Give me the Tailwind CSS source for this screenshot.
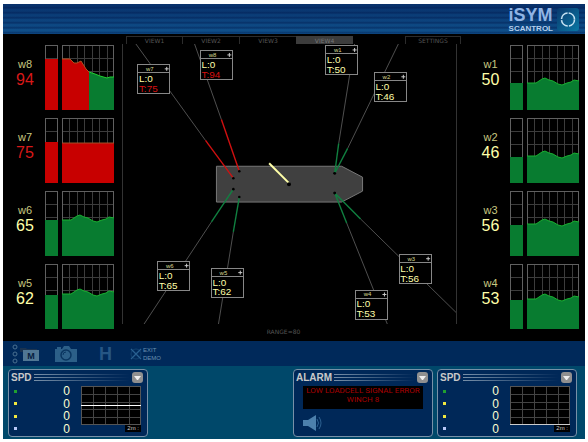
<!DOCTYPE html>
<html lang="en">
<head>
  <meta charset="UTF-8">
  <meta name="viewport" content="width=device-width, initial-scale=1.0">
  <title>iSYM Scantrol</title>
  <script src="https://cdn.jsdelivr.net/npm/@tailwindcss/browser@4"></script>
</head>
<body class="bg-white font-['Liberation_Sans',Arial,sans-serif]">
  <div class="mx-[3px] mt-1 flex flex-col">

    <!-- header -->
    <header class="flex h-[30px] items-center justify-end gap-1 pr-[6px] bg-[repeating-linear-gradient(to_bottom,transparent_0px,transparent_2px,#00184c80_4px,transparent_5px),linear-gradient(to_bottom,#08306a,#10528c)]">
      <h1 class="flex flex-col font-bold">
        <span class="text-[18px] leading-[18px] text-[#90b4e4]">iSYM</span>
        <span class="text-[8px] leading-[9px] text-[#b4d0ee]">SCANTROL</span>
      </h1>
      <svg class="h-[23px] w-[22px]" viewBox="0 0 22 23">
        <defs>
          <linearGradient id="logoBg" x1="0" y1="0" x2="1" y2="1">
            <stop offset="0" stop-color="#0a3a6e"/>
            <stop offset="1" stop-color="#0a78a4"/>
          </linearGradient>
        </defs>
        <rect width="22" height="23" rx="3" fill="url(#logoBg)"/>
        <circle cx="11" cy="11.5" r="6.5" fill="none" stroke="#c4e2f2" stroke-width="1.6" stroke-dasharray="9 1.2"/>
      </svg>
    </header>

    <!-- winches and mooring view -->
    <main class="grid grid-cols-[119px_1fr_128px] bg-black">
      <section id="portWinches" class="flex flex-col gap-2 pt-[11px] pb-3"></section>

      <section class="flex flex-col">
        <nav class="-mr-1 ml-1 flex h-[10px] items-start pt-[2px] font-['DejaVu_Sans',sans-serif] text-[6px] leading-[7px] text-[#555555]">
          <button class="w-[57px] border-x border-t border-[#2c2c2c]">VIEW1</button>
          <button class="w-[57px] border-r border-t border-[#2c2c2c]">VIEW2</button>
          <button class="w-[56px] border-t border-[#2c2c2c]">VIEW3</button>
          <button class="w-[57px] border-t border-[#3c3c3c] bg-[#3c3c3c] text-[#777777]">VIEW4</button>
          <button class="ml-auto w-[56px] border-x border-t border-[#2c2c2c]">SETTINGS</button>
        </nav>
        <div class="border-x border-[#333333]">
          <svg id="map" class="block w-full" viewBox="122 44 335 282">
            <polygon points="216,167 342,167 363,178 363,192 342,203 216,203" fill="#404040" stroke="#787878"/>
            <g id="lines" fill="none"></g>
            <path d="M269 164L289 184" stroke="#ffffa8" stroke-width="2"/>
            <circle cx="289" cy="185" r="2" fill="#000"/>
            <g id="tags"></g>
          </svg>
        </div>
        <p class="pt-1 pr-3 text-center font-['DejaVu_Sans',sans-serif] text-[6px] leading-[8px] text-[#555555]">RANGE=80</p>
      </section>

      <section id="starboardWinches" class="flex flex-col gap-2 pt-[11px] pb-3"></section>
    </main>

    <!-- toolbar -->
    <div class="flex h-[25px] items-center bg-[#00295a] pl-[9px]">
      <button aria-label="Menu" class="w-[31px]">
        <svg class="h-5 w-[31px]" viewBox="0 0 31 20">
          <g fill="none" stroke="#4a7090">
            <circle cx="3" cy="3" r="2"/>
            <circle cx="3" cy="10" r="2"/>
            <circle cx="3" cy="17" r="2"/>
          </g>
          <path d="M8 4h6l1 1h10v3h-17z" fill="#1a3350"/>
          <rect x="11" y="6" width="16" height="11" fill="#507794"/>
          <text x="19" y="15" font-size="9" font-weight="bold" text-anchor="middle" fill="#06203f">M</text>
        </svg>
      </button>
      <button aria-label="Camera" class="ml-3 pt-px">
        <svg class="h-[18px] w-[22px]" viewBox="0 0 22 18">
          <path d="M0 4h2v-2h4v2h1l2-3h5l2 3h6v13h-22z" fill="#2c5f88"/>
          <circle cx="11" cy="10" r="5" fill="none" stroke="#0a3560" stroke-width="1.5"/>
          <path d="M8 10a3 3 0 0 1 3-3" fill="none" stroke="#0a3560"/>
        </svg>
      </button>
      <button class="ml-[22px] text-[18px] leading-5 font-bold text-[#265684]">H</button>
      <button class="ml-[18px] flex items-center gap-px text-left text-[6px] leading-[8px] text-[#6890b0]">
        <svg class="h-3 w-3" viewBox="0 0 12 12" fill="none">
          <circle cx="6" cy="6" r="5" stroke="#134270"/>
          <path d="M1 1l10 10M11 1L1 11" stroke="#286090" stroke-width="1.3"/>
        </svg>
        <span>EXIT<br>DEMO</span>
      </button>
    </div>

    <!-- status panels -->
    <footer class="flex gap-1 bg-[#00486a] pt-[3px] pr-2 pb-[2px] pl-[5px]">
      <section class="mr-auto h-[68px] w-[140px] rounded-[4px] border border-[#7890a8] bg-[#002858]">
        <div class="flex h-[15px] items-center gap-[2px] pr-1 pl-[2px]">
          <h2 class="text-[10px] leading-[12px] font-bold text-[#c8c8c8]">SPD</h2>
          <span class="h-[7px] flex-1 bg-[repeating-linear-gradient(to_bottom,#7890a8_0px,#7890a8_1px,transparent_1px,transparent_3px)] mask-r-from-0%"></span>
          <button aria-label="Collapse SPD"><svg class="h-[11px] w-[11px]" viewBox="0 0 11 11"><rect width="11" height="11" rx="3" fill="#909090"/><path d="M2 4h7l-3 4h-1z" fill="#eeeeee"/></svg></button>
        </div>
        <div class="flex pl-[5px]">
          <ul class="grid h-[50px] w-[56px] grid-rows-4 text-[12px] leading-[12px] text-[#ffffd0]">
            <li class="flex items-center justify-between"><i class="size-[3px] bg-[#20a030]"></i>0</li>
            <li class="flex items-center justify-between"><i class="size-[3px] bg-[#f0e840]"></i>0</li>
            <li class="flex items-center justify-between"><i class="size-[3px] bg-[#f0e840]"></i>0</li>
            <li class="flex items-center justify-between"><i class="size-[3px] bg-[#b8c8f8]"></i>0</li>
          </ul>
          <div class="ml-[11px] flex flex-col items-end pt-px">
            <svg class="h-[39px] w-[60px] bg-black" viewBox="0 0 60 39" shape-rendering="crispEdges">
              <path d="M0 8h60M0 16h60M0 23h60M0 31h60M12 0v39M24 0v39M36 0v39M48 0v39" stroke="#444444"/>
              <rect x="0" y="0" width="59" height="38" fill="none" stroke="#555555"/>
              <path d="M0 19h60" stroke="#ffffff"/>
            </svg>
            <span class="bg-black px-[2px] text-[6px] leading-[7px] text-[#cccccc]">2m :</span>
          </div>
        </div>
      </section>

      <section class="h-[68px] w-[140px] rounded-[4px] border border-[#7890a8] bg-[#002858]">
        <div class="flex h-[15px] items-center gap-[2px] pr-1 pl-[2px]">
          <h2 class="text-[10px] leading-[12px] font-bold text-[#c8c8c8]">ALARM</h2>
          <span class="h-[7px] flex-1 bg-[repeating-linear-gradient(to_bottom,#7890a8_0px,#7890a8_1px,transparent_1px,transparent_3px)] mask-r-from-0%"></span>
          <button aria-label="Collapse alarm"><svg class="h-[11px] w-[11px]" viewBox="0 0 11 11"><rect width="11" height="11" rx="3" fill="#909090"/><path d="M2 4h7l-3 4h-1z" fill="#eeeeee"/></svg></button>
        </div>
        <p class="mx-[9px] mt-px h-[23px] bg-black text-center font-['Roboto',sans-serif] text-[8px] leading-[9px] whitespace-nowrap text-[#a80000]">LOW LOADCELL SIGNAL ERROR<br>WINCH 8</p>
        <button aria-label="Mute" class="ml-[9px] mt-[6px] block">
          <svg class="h-4 w-5" viewBox="0 0 20 16">
            <path d="M0 5h5l8-5v16l-8-5h-5z" fill="#4c80ac"/>
            <path d="M14 4q3 4 0 8M16 2q4 6 0 12" fill="none" stroke="#2c6090"/>
          </svg>
        </button>
      </section>

      <section class="h-[68px] w-[140px] rounded-[4px] border border-[#7890a8] bg-[#002858]">
        <div class="flex h-[15px] items-center gap-[2px] pr-1 pl-[2px]">
          <h2 class="text-[10px] leading-[12px] font-bold text-[#c8c8c8]">SPD</h2>
          <span class="h-[7px] flex-1 bg-[repeating-linear-gradient(to_bottom,#7890a8_0px,#7890a8_1px,transparent_1px,transparent_3px)] mask-r-from-0%"></span>
          <button aria-label="Collapse SPD"><svg class="h-[11px] w-[11px]" viewBox="0 0 11 11"><rect width="11" height="11" rx="3" fill="#909090"/><path d="M2 4h7l-3 4h-1z" fill="#eeeeee"/></svg></button>
        </div>
        <div class="flex pl-[5px]">
          <ul class="grid h-[50px] w-[56px] grid-rows-4 text-[12px] leading-[12px] text-[#ffffd0]">
            <li class="flex items-center justify-between"><i class="size-[3px] bg-[#20a030]"></i>0</li>
            <li class="flex items-center justify-between"><i class="size-[3px] bg-[#f0e840]"></i>0</li>
            <li class="flex items-center justify-between"><i class="size-[3px] bg-[#f0e840]"></i>0</li>
            <li class="flex items-center justify-between"><i class="size-[3px] bg-[#b8c8f8]"></i>0</li>
          </ul>
          <div class="ml-[11px] flex flex-col items-end pt-px">
            <svg class="h-[39px] w-[60px] bg-black" viewBox="0 0 60 39" shape-rendering="crispEdges">
              <path d="M0 8h60M0 16h60M0 23h60M0 31h60M12 0v39M24 0v39M36 0v39M48 0v39" stroke="#444444"/>
              <rect x="0" y="0" width="59" height="38" fill="none" stroke="#555555"/>
              <path d="M0 38h60" stroke="#cccccc"/>
            </svg>
            <span class="bg-black px-[2px] text-[6px] leading-[7px] text-[#cccccc]">2m :</span>
          </div>
        </div>
      </section>
    </footer>
  </div>

  <script>
    const GREEN = '#087c30';
    const RED = '#c80000';

    // bar: top of the bar, wave: height of the trend's first sample
    const port = [
      { name: 'w8', load: 94, bar: 14, kind: 'overload' },
      { name: 'w7', load: 75, bar: 24, kind: 'full' },
      { name: 'w6', load: 65, bar: 29, wave: 29 },
      { name: 'w5', load: 62, bar: 31, wave: 30 }
    ];
    const starboard = [
      { name: 'w1', load: 50, bar: 38, wave: 38 },
      { name: 'w2', load: 46, bar: 39, wave: 38 },
      { name: 'w3', load: 56, bar: 34, wave: 33 },
      { name: 'w4', load: 53, bar: 36, wave: 35 }
    ];

    function trend(w) {
      if (w.kind === 'overload') {
        return `<path d="M0 14h8l4 4h3l4-2l5 8l3 3v38h-27z" fill="${RED}"/>
          <path d="M27 27l6 2l5 2l7 2l3-1h4v33h-25z" fill="${GREEN}"/>
          <path d="M0 14h8l4 4h3l4-2l5 8l3 3" fill="none" stroke="#b05020"/>
          <path d="M27 27l6 2l5 2l7 2l3-1h4" fill="none" stroke="#20d030"/>`;
      }
      if (w.kind === 'full') {
        return `<rect y="25" width="52" height="40" fill="${RED}"/><path d="M0 25h52" stroke="#a05028"/>`;
      }
      const line = `M0 ${w.wave}h9l3-2l3-2l3-1l4 2l4 1l5 3l4 1l5-2l4-1l3-2l5 1`;
      return `<path d="${line}V65H0z" fill="${GREEN}"/><path d="${line}" fill="none" stroke="#18b030"/>`;
    }

    function winchRow(w, labelClass) {
      const alarm = w.load >= 75;
      const color = alarm ? RED : GREEN;
      return `<div class="flex h-[65px] gap-1">
        <div class="${labelClass}">
          <div class="text-[11px] leading-[14px] text-[#c8c880]">${w.name}</div>
          <div class="${alarm ? 'text-[16px] leading-[18px] text-[#d81818]' : 'text-[16px] leading-[18px] text-[#ffffa8]'}">${w.load}</div>
        </div>
        <svg class="h-[65px] w-[13px]" viewBox="0 0 13 65" shape-rendering="crispEdges">
          <path d="M0 13h13M0 26h13" stroke="#3c3c3c"/>
          <rect width="12" height="64" fill="none" stroke="#606060"/>
          <rect y="${w.bar}" width="13" height="${65 - w.bar}" fill="${color}"/>
        </svg>
        <svg class="h-[65px] w-[52px]" viewBox="0 0 52 65">
          <g shape-rendering="crispEdges" fill="none">
            <path d="M0 13h52M0 26h52M7 0v65M15 0v65M22 0v65M30 0v65M37 0v65M45 0v65" stroke="#3c3c3c"/>
            <rect width="51" height="64" stroke="#606060"/>
          </g>
          ${trend(w)}
        </svg>
      </div>`;
    }

    document.getElementById('portWinches').innerHTML =
      port.map(w => winchRow(w, 'w-[38px] pt-3 pl-[6px] text-center')).join('');
    document.getElementById('starboardWinches').innerHTML =
      starboard.map(w => winchRow(w, 'w-[49px] pt-3 pl-[18px] text-center')).join('');

    // mooring lines: from the ship to the end of the coloured part, then to the far end
    const moorings = [
      { name: 'w7', load: 75, from: [233, 179], mid: [205, 141], to: [135, 44], tag: [137, 65] },
      { name: 'w8', load: 94, from: [239, 172], mid: [221, 120], to: [194, 44], tag: [200, 51] },
      { name: 'w1', load: 50, from: [335, 174], mid: [339, 144], to: [355, 44], tag: [326, 46] },
      { name: 'w2', load: 46, from: [335, 174], mid: [348, 149], to: [399, 44], tag: [375, 73] },
      { name: 'w6', load: 65, from: [233, 190], mid: [211, 223], to: [143, 326], tag: [157, 263] },
      { name: 'w5', load: 62, from: [239, 198], mid: [233, 233], to: [218, 326], tag: [211, 270] },
      { name: 'w3', load: 56, from: [335, 194], mid: [361, 220], to: [457, 314], tag: [400, 256] },
      { name: 'w4', load: 53, from: [335, 194], mid: [347, 224], to: [388, 326], tag: [356, 292] }
    ];

    document.getElementById('lines').innerHTML = moorings.map(m => `
      <path d="M${m.mid}L${m.to}" stroke="#505050"/>
      <path d="M${m.from}L${m.mid}" stroke="${m.load >= 75 ? '#d01010' : '#108040'}" stroke-width="1.4"/>
      <circle cx="${m.from[0]}" cy="${m.from[1]}" r="1.3" fill="#000"/>`).join('');

    document.getElementById('tags').innerHTML = moorings.map(m => `
      <g transform="translate(${m.tag})">
        <rect width="32" height="29" fill="#000" stroke="#888888" shape-rendering="crispEdges"/>
        <path d="M0 8h32" stroke="#888888" shape-rendering="crispEdges"/>
        <text x="12" y="6" font-size="6" text-anchor="middle" fill="#d8d890">${m.name}</text>
        <path d="M27 4h4M29 2v4" stroke="#cccccc"/>
        <text x="1" y="17" font-size="10" fill="#ffffa8">L:0</text>
        <text x="1" y="27" font-size="10" fill="${m.load >= 75 ? '#d81010' : '#ffffa8'}">T:${m.load}</text>
      </g>`).join('');
  </script>
</body>
</html>
